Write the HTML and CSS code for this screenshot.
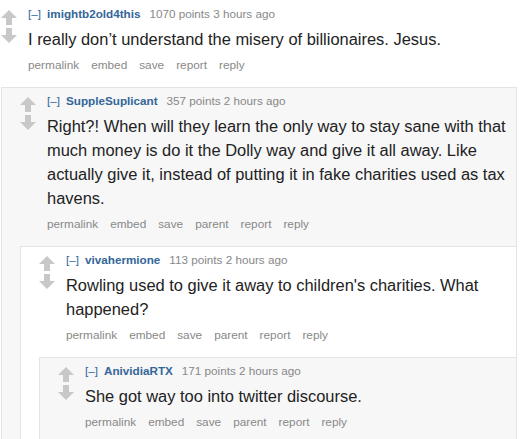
FILE: index.html
```html
<!DOCTYPE html>
<html>
<head>
<meta charset="utf-8">
<link rel="stylesheet" href="styles.css">
</head>
<body>
<div class="comment top">
  <div class="entry">
    <div class="arrows">
      <svg class="arrow" viewBox="0 0 16 15" width="16" height="15"><polygon points="8,0 16,8 11,8 11,15 5,15 5,8 0,8"/></svg>
      <svg class="arrow" viewBox="0 0 16 15" width="16" height="15"><polygon points="5,0 11,0 11,7 16,7 8,15 0,7 5,7"/></svg>
    </div>
    <div class="main">
      <p class="tagline"><span class="expand">[–]</span><span class="author">imightb2old4this</span><span class="meta">1070 points 3 hours ago</span></p>
      <p class="text">I really don’t understand the misery of billionaires. Jesus.</p>
      <ul class="buttons"><li>permalink</li><li>embed</li><li>save</li><li>report</li><li>reply</li></ul>
    </div>
  </div>
  <div class="children">
    <div class="comment box gray outer">
      <div class="entry">
        <div class="arrows">
          <svg class="arrow" viewBox="0 0 16 15" width="16" height="15"><polygon points="8,0 16,8 11,8 11,15 5,15 5,8 0,8"/></svg>
          <svg class="arrow" viewBox="0 0 16 15" width="16" height="15"><polygon points="5,0 11,0 11,7 16,7 8,15 0,7 5,7"/></svg>
        </div>
        <div class="main">
          <p class="tagline"><span class="expand">[–]</span><span class="author">SuppleSuplicant</span><span class="meta">357 points 2 hours ago</span></p>
          <p class="text">Right?! When will they learn the only way to stay sane with that much money is do it the Dolly way and give it all away. Like actually give it, instead of putting it in fake charities used as tax havens.</p>
          <ul class="buttons"><li>permalink</li><li>embed</li><li>save</li><li>parent</li><li>report</li><li>reply</li></ul>
        </div>
      </div>
      <div class="children">
        <div class="comment box white">
          <div class="entry">
            <div class="arrows">
              <svg class="arrow" viewBox="0 0 16 15" width="16" height="15"><polygon points="8,0 16,8 11,8 11,15 5,15 5,8 0,8"/></svg>
              <svg class="arrow" viewBox="0 0 16 15" width="16" height="15"><polygon points="5,0 11,0 11,7 16,7 8,15 0,7 5,7"/></svg>
            </div>
            <div class="main">
              <p class="tagline"><span class="expand">[–]</span><span class="author">vivahermione</span><span class="meta">113 points 2 hours ago</span></p>
              <p class="text">Rowling used to give it away to children's charities. What happened?</p>
              <ul class="buttons"><li>permalink</li><li>embed</li><li>save</li><li>parent</li><li>report</li><li>reply</li></ul>
            </div>
          </div>
          <div class="children">
            <div class="comment box gray">
              <div class="entry">
                <div class="arrows">
                  <svg class="arrow" viewBox="0 0 16 15" width="16" height="15"><polygon points="8,0 16,8 11,8 11,15 5,15 5,8 0,8"/></svg>
                  <svg class="arrow" viewBox="0 0 16 15" width="16" height="15"><polygon points="5,0 11,0 11,7 16,7 8,15 0,7 5,7"/></svg>
                </div>
                <div class="main">
                  <p class="tagline"><span class="expand">[–]</span><span class="author">AnividiaRTX</span><span class="meta">171 points 2 hours ago</span></p>
                  <p class="text">She got way too into twitter discourse.</p>
                  <ul class="buttons"><li>permalink</li><li>embed</li><li>save</li><li>parent</li><li>report</li><li>reply</li></ul>
                </div>
              </div>
            </div>
          </div>
        </div>
      </div>
    </div>
  </div>
</div>
</body>
</html>
```
FILE: styles.css
```css
html, body {
  margin: 0;
  padding: 0;
  background: #fff;
}
body {
  font-family: "Liberation Sans", Arial, sans-serif;
  height: 439px;
  overflow: hidden;
}
.top {
  padding: 1px 7px 0 1px;
}
.box {
  border: 1px solid #e4e4e4;
  border-right: none;
  border-bottom: none;
  padding-left: 18px;
}
.box.outer {
  border-right: 1px solid #e4e4e4;
}
.gray { background: #f7f7f8; }
.white { background: #fff; }
.entry {
  display: flex;
  padding: 5px 0 14px 0;
}
.arrows {
  width: 27px;
  flex: none;
  display: flex;
  flex-direction: column;
  gap: 3px;
  padding-top: 4px;
}
.arrow {
  display: block;
  fill: #c8c8c8;
}
.main {
  flex: 1;
  min-width: 0;
}
.tagline {
  margin: 0;
  font-size: 11.7px;
  line-height: 16px;
  color: #888;
}
.expand {
  color: #369;
  margin-right: 6px;
}
.author {
  color: #369;
  font-weight: bold;
  margin-right: 9px;
}
.text {
  margin: 5px 0 0 0;
  font-size: 16.45px;
  line-height: 24px;
  color: #222;
}
.buttons {
  list-style: none;
  margin: 6px 0 0 0;
  padding: 0;
  display: flex;
  gap: 12px;
  font-size: 11.8px;
  line-height: 16px;
  color: #888;
}
```
